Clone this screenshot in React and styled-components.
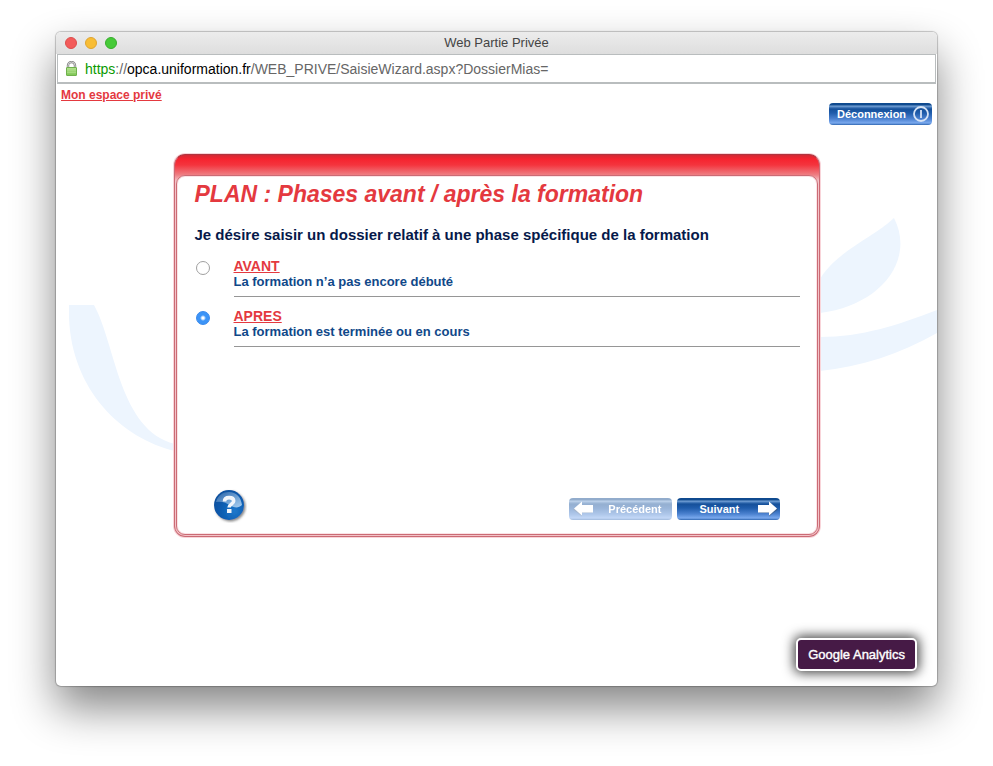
import React, { useState } from 'react';
import styled, { createGlobalStyle } from 'styled-components';

const GlobalStyle = createGlobalStyle`
  * {
    box-sizing: border-box;
  }

  body {
    margin: 0;
    background: #fff;
    font-family: "Liberation Sans", Arial, Helvetica, sans-serif;
  }
`;

const Desktop = styled.div`
  display: flex;
  min-height: 100vh;
  padding: 32px 56px 80px;
  overflow: hidden;
`;

const Window = styled.div`
  display: flex;
  flex: 1;
  flex-direction: column;
  min-width: 0;
  background: #fff;
  border-radius: 5px;
  box-shadow:
    0 0 1px 1px rgba(0, 0, 0, 0.22),
    0 22px 44px rgba(0, 0, 0, 0.48);
`;

const TitleBar = styled.header`
  display: grid;
  grid-template-columns: 1fr auto 1fr;
  align-items: center;
  height: 22px;
  padding: 0 9px;
  background: linear-gradient(#ececec, #dedede);
  border-radius: 5px 5px 0 0;
`;

const Lights = styled.div`
  display: flex;
  gap: 8px;
`;

const Light = styled.button`
  width: 12px;
  height: 12px;
  padding: 0;
  border: 1px solid ${(props) => props.$edge};
  border-radius: 50%;
  background: ${(props) => props.$color};
`;

const WindowTitle = styled.span`
  color: #444;
  font-size: 13px;
  line-height: 20px;
`;

const AddressBar = styled.div`
  display: flex;
  align-items: center;
  gap: 7px;
  height: 30px;
  margin: 0 1px;
  padding: 0 7px;
  background: #fff;
  border: 1px solid #b9bdbe;
  border-bottom-width: 2px;
  color: #666;
  font-size: 14px;
`;

const Scheme = styled.span`
  color: #0a9a00;
`;

const Host = styled.span`
  color: #000;
`;

const Page = styled.main`
  position: relative;
  display: flex;
  flex: 1;
  flex-direction: column;
  padding: 4px 5px 15px;
`;

/* Pale shapes that sit behind the wizard */
const LeftSwirl = styled.svg`
  position: absolute;
  top: 221px;
  left: 13px;
`;

const RightSwirl = styled.svg`
  position: absolute;
  top: 132px;
  right: 0;
`;

const HomeLink = styled.a`
  align-self: flex-start;
  color: #e4393f;
  font-size: 12px;
  font-weight: bold;
  line-height: 15px;
`;

const BlueButton = styled.button`
  display: flex;
  align-items: center;
  justify-content: space-between;
  width: 103px;
  height: 22px;
  padding: ${(props) => props.$padding || '0 2px'};
  border: 0;
  border-radius: 4px;
  background: linear-gradient(
    #0f4a8f 0,
    #0f4a8f 2px,
    #7ba6d8 3px,
    #4f83c2 4px,
    #15509a 6px,
    #1f5cab 10px,
    #4c82d0 16px,
    #7aa9ee 20px,
    #2f66b0 22px
  );
  color: #fff;
  font-family: inherit;
  font-size: 11px;
  font-weight: bold;
  line-height: 20px;
  opacity: ${(props) => (props.disabled ? 0.45 : 1)};
`;

const LogoutButton = styled(BlueButton)`
  align-self: flex-end;
`;

const Card = styled.section`
  position: relative;
  width: 100%;
  max-width: 646px;
  margin: 29px auto 0;
  padding: 0 1px 1px;
  background: linear-gradient(#d12a35 0, #f6232f 4px, #f4343e 10px, #ee7f84 20px, #f3c3c8 26px, #f3c3c8 100%);
  border: 1px solid #cb6b75;
  border-top-color: #b0353f;
  border-radius: 11px;
  box-shadow: 0 0 0 1px #f9d5da;
`;

const CardBody = styled.form`
  display: flex;
  flex-direction: column;
  min-height: 360px;
  margin-top: 20px;
  padding: 3px 17px 11px 18px;
  background: #fff;
  border: 1px solid #cb6b75;
  border-radius: 9px;
  box-shadow: inset 0 0 0 1px #fbe3e6;
`;

const Title = styled.h1`
  margin: 0;
  color: #e4393f;
  font-size: 23px;
  font-style: italic;
  line-height: 30px;
`;

const Question = styled.h2`
  margin: 17px 0 14px;
  color: #06194a;
  font-size: 15px;
  line-height: 18px;
`;

const Choice = styled.div`
  display: grid;
  grid-template-columns: 39px 1fr;
  height: 50px;
`;

const Radio = styled.input`
  appearance: none;
  width: 14px;
  height: 14px;
  margin: 3px 0 0 1px;
  background: #fff;
  border: 1px solid #a0a0a0;
  border-radius: 50%;

  &:checked {
    background: radial-gradient(#fff 0, #fff 1px, #3c94f7 3px);
    border-color: #3788ec;
  }
`;

const ChoiceText = styled.div`
  align-self: start;
  padding-bottom: 7px;
  border-bottom: 1px solid #969696;
  font-weight: bold;
`;

const ChoiceLink = styled.a`
  display: block;
  width: fit-content;
  color: #e4393f;
  font-size: 14px;
  line-height: 16px;
`;

const ChoiceLabel = styled.label`
  display: block;
  color: #104889;
  font-size: 13px;
  line-height: 15px;
`;

const CardFooter = styled.div`
  display: flex;
  align-items: flex-end;
  gap: 5px;
  margin-top: auto;
  padding: 0 20px 0 18px;
`;

const HelpButton = styled.button`
  height: 34px;
  margin-right: auto;
  padding: 0;
  border: 0;
  background: none;
`;

const Steps = styled.div`
  display: flex;
  gap: 5px;
  padding-bottom: 3px;
`;

const AnalyticsButton = styled.button`
  align-self: flex-end;
  height: 33px;
  margin: auto 15px 0 0;
  padding: 0 10px;
  background: #461a46;
  border: 2px solid #fff;
  border-radius: 5px;
  box-shadow: 0 0 12px 2px rgba(0, 0, 0, 0.75);
  color: #fff;
  font-family: inherit;
  font-size: 13px;
  -webkit-text-stroke: 0.4px #fff;
`;

const LockIcon = () => (
  <svg width="13" height="16" viewBox="0 0 13 16" aria-hidden="true">
    <defs>
      <linearGradient id="lock" x1="0" y1="0" x2="0" y2="1">
        <stop offset="0" stopColor="#b7e392" />
        <stop offset="1" stopColor="#7cc653" />
      </linearGradient>
    </defs>
    <path d="M3 7V4.500a3.500 3.500 0 0 1 7 0V7" fill="none" stroke="#858585" strokeWidth="2.400" />
    <path d="M3 7V4.500a3.500 3.500 0 0 1 7 0V7" fill="none" stroke="#dcdcdc" strokeWidth="0.900" />
    <rect x="1.500" y="6.500" width="10" height="8" rx="0.500" fill="url(#lock)" stroke="#6fb04c" />
    <path d="M2 9.500h9M2 11.500h9" stroke="#a5da80" />
  </svg>
);

const PowerIcon = () => (
  <svg width="18" height="18" viewBox="0 0 18 18" aria-hidden="true">
    <circle cx="9" cy="9" r="7" fill="none" stroke="#d6e3f5" strokeWidth="1.800" />
    <path d="M9 5v8" stroke="#d6e3f5" strokeWidth="1.800" />
  </svg>
);

const ArrowIcon = ({ left }) => (
  <svg width="20" height="16" viewBox="0 0 20 16" aria-hidden="true">
    <g transform={left ? 'translate(20 0) scale(-1 1)' : undefined}>
      <path d="M1 5h10V1.500L20 8.500l-9 7V12H1z" fill="#456" opacity="0.45" />
      <path d="M0 4h11V0.500l8 7-8 7V11.500H0z" fill="#fff" />
    </g>
  </svg>
);

const HelpIcon = () => (
  <svg width="34" height="34" viewBox="0 0 34 34" aria-hidden="true">
    <defs>
      <radialGradient id="helpBall" cx="0.68" cy="0.7" r="0.75">
        <stop offset="0" stopColor="#1f78cc" />
        <stop offset="0.6" stopColor="#0a5cb0" />
        <stop offset="1" stopColor="#0a509e" />
      </radialGradient>
      <linearGradient id="helpGloss" x1="0" y1="0" x2="1" y2="1">
        <stop offset="0" stopColor="#fff" stopOpacity="0.08" />
        <stop offset="1" stopColor="#d8edff" stopOpacity="0.75" />
      </linearGradient>
      <filter id="helpShadow" x="-20%" y="-20%" width="150%" height="150%">
        <feDropShadow dx="1.500" dy="1.500" stdDeviation="0.900" floodColor="#555" floodOpacity="0.7" />
      </filter>
    </defs>
    <circle cx="16" cy="16" r="15" fill="url(#helpBall)" filter="url(#helpShadow)" />
    <path d="M3 13C5 6 10 3 16 3c7 0 12 5 13 13-3 3-7 3-11 1-5-4-10-5-15-4z" fill="url(#helpGloss)" />
    <path
      d="M11.500 12.500c0-2.600 2-3.900 4.600-3.900s4.600 1.200 4.600 3.400c0 3-4.600 3.400-4.600 6.600"
      fill="none"
      stroke="#f2f6fb"
      strokeWidth="3.600"
    />
    <rect x="14" y="20" width="4.500" height="4" fill="#f2f6fb" />
  </svg>
);

const choices = [
  { id: 'avant', title: 'AVANT', text: 'La formation n’a pas encore débuté' },
  { id: 'apres', title: 'APRES', text: 'La formation est terminée ou en cours' },
];

const App = () => {
  const [phase, setPhase] = useState('apres');

  const pick = (e, id) => {
    e.preventDefault();
    setPhase(id);
  };

  return (
    <Desktop>
      <GlobalStyle />
      <Window>
        <TitleBar>
          <Lights>
            <Light $color="#f35b5a" $edge="#dc4d4b" aria-label="Fermer" />
            <Light $color="#f8bd35" $edge="#dfa42f" aria-label="Réduire" />
            <Light $color="#46ca38" $edge="#37ad2c" aria-label="Agrandir" />
          </Lights>
          <WindowTitle>Web Partie Privée</WindowTitle>
        </TitleBar>
        <AddressBar>
          <LockIcon />
          <span>
            <Scheme>https</Scheme>://<Host>opca.uniformation.fr</Host>/WEB_PRIVE/SaisieWizard.aspx?DossierMias=
          </span>
        </AddressBar>

        <Page>
          <LeftSwirl width="106" height="146" viewBox="0 0 106 146" aria-hidden="true">
            <path d="M0 0h25C47 40 50 125 106 139v7C50 133-3 80 0 0z" fill="#edf5fe" />
          </LeftSwirl>
          <RightSwirl width="117" height="156" viewBox="0 0 117 156" aria-hidden="true">
            <path d="M0 63C18 34 53 22 74 2c22 43-15 88-74 95z" fill="#edf5fe" />
            <path d="M0 121c42 0 78-12 117-27v23C80 138 40 151 0 155z" fill="#edf5fe" />
          </RightSwirl>

          <HomeLink href="#accueil">Mon espace privé</HomeLink>
          <LogoutButton type="button" $padding="0 2px 0 8px">
            Déconnexion
            <PowerIcon />
          </LogoutButton>

          <Card>
            <CardBody onSubmit={(e) => e.preventDefault()}>
              <Title>PLAN : Phases avant / après la formation</Title>
              <Question>Je désire saisir un dossier relatif à une phase spécifique de la formation</Question>
              {choices.map((choice) => (
                <Choice key={choice.id}>
                  <Radio
                    type="radio"
                    name="phase"
                    id={choice.id}
                    checked={phase === choice.id}
                    onChange={() => setPhase(choice.id)}
                  />
                  <ChoiceText>
                    <ChoiceLink href={`#${choice.id}`} onClick={(e) => pick(e, choice.id)}>
                      {choice.title}
                    </ChoiceLink>
                    <ChoiceLabel htmlFor={choice.id}>{choice.text}</ChoiceLabel>
                  </ChoiceText>
                </Choice>
              ))}
              <CardFooter>
                <HelpButton type="button" aria-label="Aide">
                  <HelpIcon />
                </HelpButton>
                <Steps>
                  <BlueButton type="button" disabled $padding="0 10px 0 4px">
                    <ArrowIcon left />
                    Précédent
                  </BlueButton>
                  <BlueButton type="submit" $padding="0 2px 0 23px">
                    Suivant
                    <ArrowIcon />
                  </BlueButton>
                </Steps>
              </CardFooter>
            </CardBody>
          </Card>

          <AnalyticsButton type="button">Google Analytics</AnalyticsButton>
        </Page>
      </Window>
    </Desktop>
  );
};

export default App;
